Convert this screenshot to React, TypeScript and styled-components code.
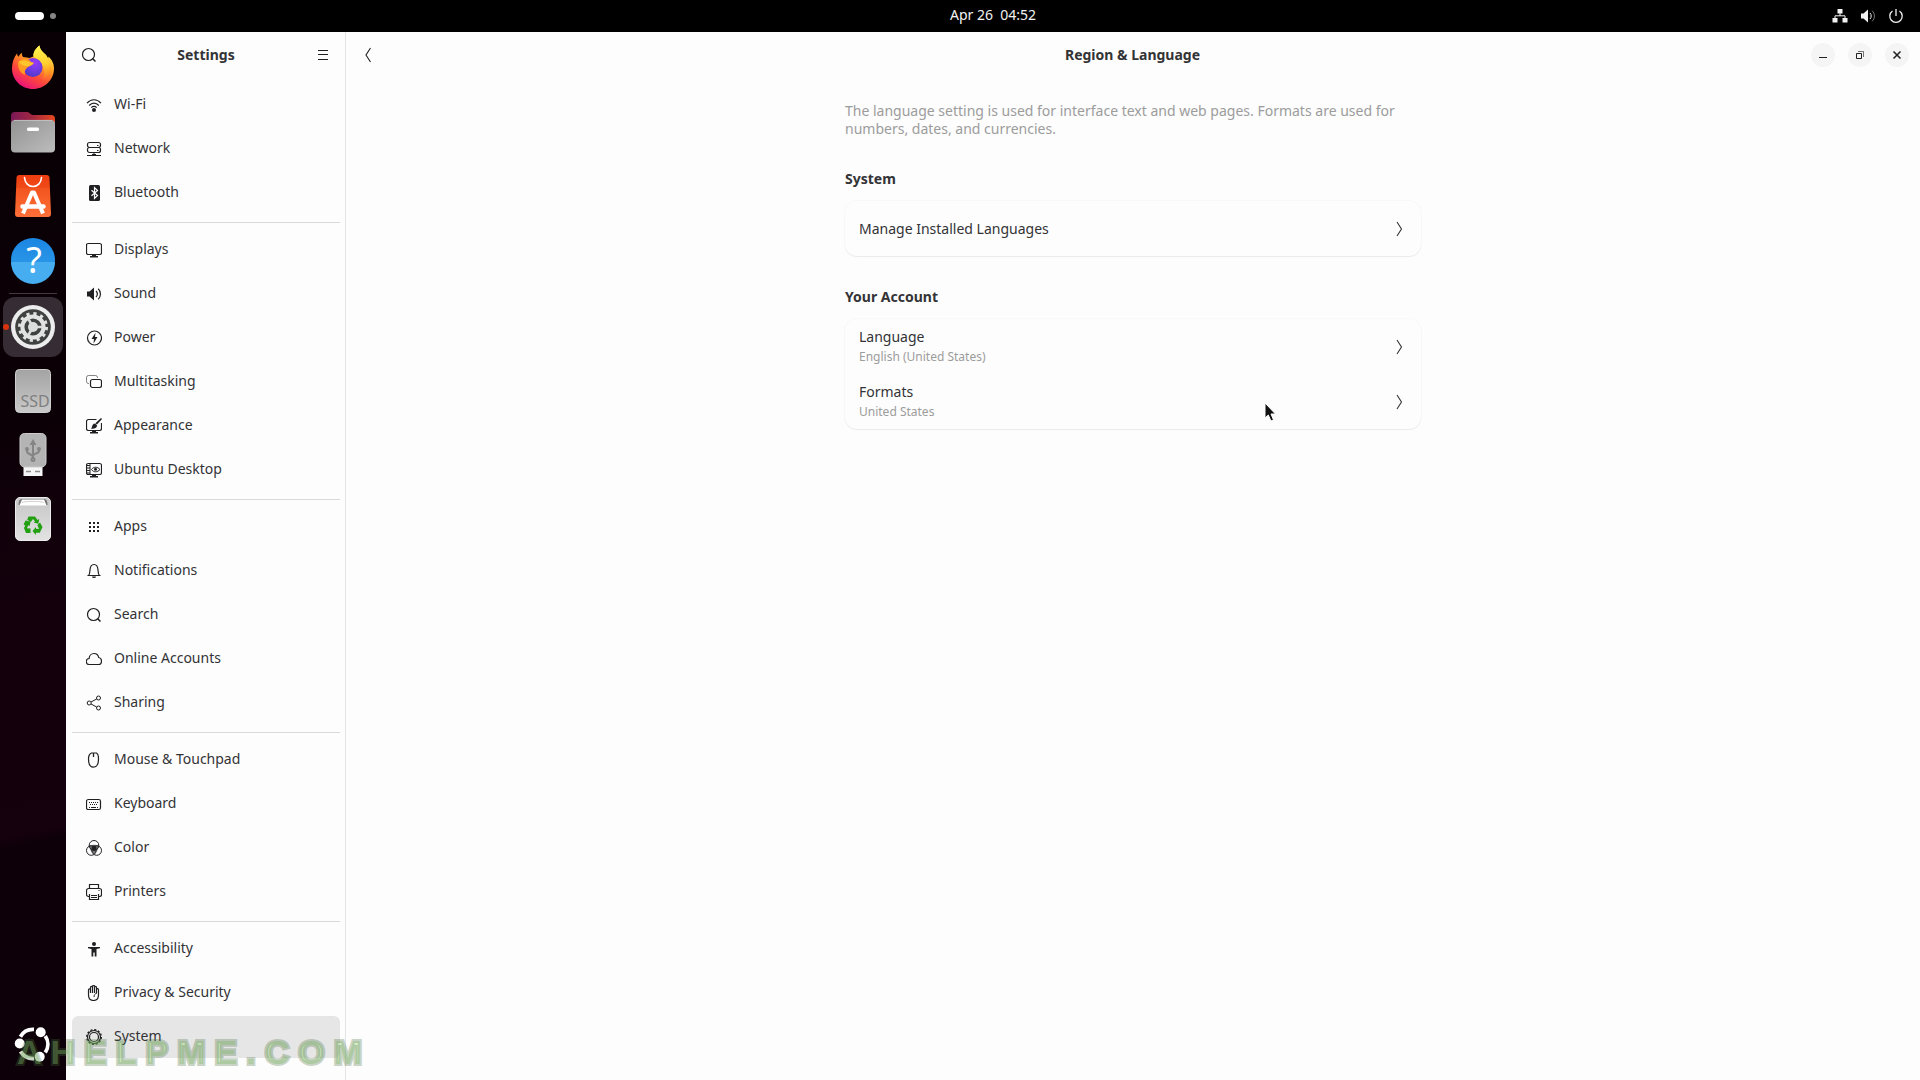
import React from "react";
import styled, { createGlobalStyle, css } from "styled-components";

const ink = "#333336";
const iconInk = "#202023";
const muted = "#9c9c9c";

const GlobalStyle = createGlobalStyle`
  * { box-sizing: border-box; }
  html, body { margin: 0; height: 100%; }
  #root { height: 100%; }
  body { background: #0e0009; overflow: hidden; }
  body, button { font-family: "Noto Sans", "Open Sans", sans-serif; font-size: 14px; color: ${ink}; }
  button { border: 0; padding: 0; background: none; }
`;

const Desktop = styled.div`
  min-height: 100vh;
  display: grid;
  grid-template: 32px 1fr / 66px 1fr;
  position: relative;
`;

const TopBar = styled.header`
  grid-column: 1 / -1;
  display: grid;
  grid-template-columns: 66px 1fr;
  align-items: center;
  background: #000;
  color: #f2f2f2;
`;

const Workspaces = styled.button`
  display: flex;
  align-items: center;
  gap: 6px;
  padding-left: 15px;
`;

const Workspace = styled.span<{ $active?: boolean }>`
  width: ${(p) => (p.$active ? 29 : 6)}px;
  height: ${(p) => (p.$active ? 8 : 6)}px;
  border-radius: 4px;
  background: ${(p) => (p.$active ? "#fff" : "#858585")};
`;

const BarRest = styled.div`
  display: grid;
  grid-template-columns: 1fr auto 1fr;
  align-items: center;
`;

const Clock = styled.button`
  grid-column: 2;
  padding-bottom: 2px;
  color: #f2f2f2;
  line-height: 20px;
  white-space: pre;
`;

const Status = styled.button`
  justify-self: end;
  display: flex;
  gap: 12px;
  padding-right: 16px;
  color: #f2f2f2;
`;

const Dock = styled.nav`
  display: flex;
  flex-direction: column;
  align-items: center;
  padding: 4px 0;
  background: linear-gradient(168deg, #080004 0%, #0b0006 36%, #12000b 50%, #15000e 76%, #0d0008 77%, #0d0008 100%);
`;

const DockItem = styled.button<{ $active?: boolean }>`
  position: relative;
  width: 60px;
  height: 60px;
  margin: 2px 0;
  flex: none;
  display: grid;
  place-items: center;
  border-radius: 12px;
  ${(p) => p.$active && css`background: #352c34;`}
`;

const RunningDot = styled.span`
  position: absolute;
  left: 0;
  top: 27px;
  width: 6px;
  height: 6px;
  border-radius: 50%;
  background: #d8320e;
`;

const DockRule = styled.hr`
  width: 48px;
  height: 1px;
  margin: 1px 0;
  flex: none;
  border: 0;
  background: #423a40;
`;

const DockSpacer = styled.div`
  flex: 1;
`;

const Window = styled.div`
  display: grid;
  grid-template-columns: 280px 1fr;
  background: #fdfdfd;
`;

const Sidebar = styled.aside`
  border-right: 1px solid #e4e4e4;
`;

const PaneHeader = styled.header<{ $side?: boolean }>`
  height: 46px;
  display: grid;
  grid-template-columns: 1fr auto 1fr;
  align-items: center;
  padding: ${(p) => (p.$side ? "0 10px 0 11px" : "0 11px 0 10px")};
`;

const Title = styled.h1`
  margin: 0;
  font-size: 14px;
  line-height: 20px;
  font-weight: 700;
`;

const IconButton = styled.button<{ $end?: boolean }>`
  width: 24px;
  height: 24px;
  display: grid;
  place-items: center;
  color: ${iconInk};
  justify-self: ${(p) => (p.$end ? "end" : "start")};
`;

const WindowButtons = styled.div`
  display: flex;
  justify-content: flex-end;
  gap: 13px;
`;

const RoundButton = styled.button`
  width: 24px;
  height: 24px;
  display: grid;
  place-items: center;
  border-radius: 50%;
  color: ${iconInk};
  background: #f5f5f5;
`;

const Nav = styled.nav`
  padding: 5px 5px 0 6px;
`;

const NavGroup = styled.ul`
  list-style: none;
  margin: 0;
  padding: 0;
  & + & {
    margin-top: 7px;
    padding-top: 5px;
    border-top: 1px solid #d9d9d9;
  }
`;

const NavLink = styled.a<{ $selected?: boolean }>`
  display: flex;
  align-items: center;
  gap: 12px;
  height: 42px;
  padding: 0 14px;
  border-radius: 6px;
  color: ${iconInk};
  text-decoration: none;
  background: ${(p) => (p.$selected ? "#e6e6e6" : "transparent")};
`;

const NavLabel = styled.span`
  padding-bottom: 2px;
  line-height: 20px;
  color: ${ink};
`;

const NavItem = styled.li`
  padding: 1px 0;
`;

const Page = styled.div`
  max-width: 576px;
  margin: 0 auto;
  padding-top: 24px;
`;

const Description = styled.p`
  margin: 0;
  line-height: 18px;
  color: ${muted};
`;

const SectionTitle = styled.h2`
  margin: 32px 0 13px;
  font-size: 14px;
  line-height: 18px;
  font-weight: 700;
`;

const Card = styled.div`
  border-radius: 12px;
  background: #fdfdfd;
  box-shadow: 0 0 0 1px rgba(0, 0, 0, 0.02), 0 1px 1px rgba(0, 0, 0, 0.06);
`;

const CardRow = styled.button`
  width: 100%;
  height: 55px;
  display: flex;
  align-items: center;
  justify-content: space-between;
  padding: 0 14px;
  text-align: left;
`;

const RowText = styled.span`
  display: grid;
  line-height: 20px;
`;

const RowSub = styled.span`
  font-size: 12px;
  line-height: 20px;
  color: ${muted};
`;

const Pointer = styled.svg`
  position: absolute;
  left: 1264px;
  top: 402px;
`;

const Watermark = styled.div`
  position: absolute;
  left: 17px;
  bottom: 10px;
  font: 700 34px/36px "Liberation Sans", sans-serif;
  letter-spacing: 9px;
  color: rgba(150, 215, 120, 0.4);
  -webkit-text-stroke: 4px rgba(70, 110, 60, 0.28);
  pointer-events: none;
`;

const G = ({ children, size = 16 }: { children: React.ReactNode; size?: number }) => (
  <svg width={size} height={size} viewBox="0 0 16 16" fill="none" stroke="currentColor" aria-hidden="true">
    {children}
  </svg>
);
const solid = { fill: "currentColor", stroke: "none" };

const monitor = (
  <>
    <rect x=".5" y="1.5" width="15" height="11" rx="1.800" strokeWidth="1.200" />
    <path {...solid} d="M6 13h4v1h2v1.500H4V14h2z" />
  </>
);

const icons: Record<string, React.ReactNode> = {
  wifi: (
    <G>
      <path strokeWidth="1.200" d="M1 6.200C5 1.600 11 1.600 15 6.200M3.200 8.500c2.800-3.100 6.800-3.100 9.600 0M5.300 10.600c1.600-1.700 3.800-1.700 5.400 0" />
      <circle {...solid} cx="8" cy="13" r="2" />
    </G>
  ),
  network: (
    <G>
      <rect x="1.500" y="1.500" width="13" height="5" rx="2" strokeWidth="1.200" />
      <rect x="1.500" y="6.500" width="13" height="5" rx="2" strokeWidth="1.200" />
      <path d="M1 14.500h14M8 11.500v2M11 4.500h1.500M11 9.500h1.500M6 13.500h4" />
    </G>
  ),
  bluetooth: (
    <G>
      <rect {...solid} x="3" y="0" width="11" height="16" rx="1.600" />
      <path stroke="#fdfdfd" strokeWidth="1.200" d="M5.500 5.300l6 5.300-3 2.700V2.700l3 2.700-6 5.300" />
    </G>
  ),
  displays: <G>{monitor}</G>,
  sound: (
    <G>
      <path {...solid} d="M1 5.500h2.500L8 1.500v13l-4.500-4H1z" />
      <path strokeWidth="1.200" d="M10 5c1.600 1.700 1.600 4.300 0 6M12.200 2.800c3 2.900 3 7.500 0 10.400" />
    </G>
  ),
  power: (
    <G>
      <circle cx="8.500" cy="8" r="7" strokeWidth="1.200" />
      <path {...solid} d="M9.500 2.800L5.500 9H8l-.5 4.500 4-6.500H9z" />
    </G>
  ),
  multitasking: (
    <G>
      <rect x="4.500" y="5.500" width="11" height="8" rx="2" strokeWidth="1.200" />
      <path opacity=".55" d="M3 9.500h-.5a2 2 0 0 1-2-2v-4a2 2 0 0 1 2-2h7a2 2 0 0 1 2 2V4" />
    </G>
  ),
  appearance: (
    <G>
      <path strokeWidth="1.200" d="M10.500 1.500h-8a2 2 0 0 0-2 2v7a2 2 0 0 0 2 2h11a2 2 0 0 0 2-2V5" />
      <path {...solid} d="M6 13h4v1h2v1.500H4V14h2zM15 0l1 1-5 5.600-1.600-1.300zM9 5.600l2 1.700c.3 2.500-2.300 3.900-6 3.400 1.400-.8.800-4.800 4-5.100z" />
    </G>
  ),
  ubuntu: (
    <G>
      {monitor}
      <path d="M1 3.500h3M1 6h3M1 8.500h3M1 11h3M4 2v10" />
      <path d="M5.500 7.500c2-3 6-3 8.500 0-2.500 3-6.500 3-8.500 0z" />
      <circle {...solid} cx="9.500" cy="7.300" r="1.500" />
    </G>
  ),
  apps: (
    <G>
      {[3, 7, 11].flatMap((y) => [3, 7, 11].map((x) => <rect key={`${x}-${y}`} {...solid} x={x} y={y} width="2" height="2" />))}
    </G>
  ),
  bell: (
    <G>
      <path strokeWidth="1.200" d="M2.500 12.500c1.300-1 1.300-3 1.500-5.500C4.200 3.500 5.500 1.500 8 1.500s3.800 2 4 5.500c.2 2.500.2 4.500 1.500 5.500z" />
      <path {...solid} d="M6 13.500h4a2 1.500 0 0 1-4 0z" />
    </G>
  ),
  search: (
    <G>
      <circle cx="7.500" cy="7.500" r="6" strokeWidth="1.200" />
      <path strokeWidth="1.500" d="M11.500 11.500l3 3" />
    </G>
  ),
  cloud: (
    <G>
      <path strokeWidth="1.200" d="M3.500 13.500a3 3 0 0 1-.4-6C3.300 4.700 5.400 2.500 8 2.500c2.400 0 4.200 1.500 4.700 4 1.600.2 2.800 1.600 2.800 3.500s-1.200 3.500-3 3.500z" />
    </G>
  ),
  share: (
    <G strokeWidth="1.200">
      <circle cx="3.200" cy="8" r="2" />
      <circle cx="12.500" cy="3" r="2" />
      <circle cx="12.500" cy="13" r="2" />
      <path d="M5 7l5.700-3M5 9l5.700 3" />
    </G>
  ),
  mouse: (
    <G>
      <path strokeWidth="1.200" d="M5.500 1h5c1.600 1 2 3 2 5.700 0 5-1.300 8.500-5 8.500s-5-3.500-5-8.500c0-2.700.9-4.700 3-5.700z" />
      <path strokeWidth="1.300" d="M7.500 1v4" />
    </G>
  ),
  keyboard: (
    <G>
      <rect x=".5" y="3.500" width="14" height="10" rx="1.800" strokeWidth="1.200" />
      <path strokeDasharray="1 1" d="M3 6.500h10M4 8.500h8" />
      <path d="M3 11.500h1M5 11.500h5M11 11.500h1" />
    </G>
  ),
  color: (
    <G>
      <path {...solid} opacity=".6" d="M3 5.500c3-1 7-1 10 0 0 3-2 6-5 9-3-3-5-6-5-9z" />
      <path {...solid} d="M5.500 6.800L8 5.500l2.500 1.300-.5 3L8 11l-2-1.200z" />
      <circle cx="8" cy="5.300" r="4.800" />
      <circle cx="5.300" cy="10.500" r="4.800" />
      <circle cx="10.700" cy="10.500" r="4.800" />
    </G>
  ),
  printer: (
    <G>
      <path strokeWidth="1.200" d="M3.500 4V.5h9V4M3 12.500H2.500a2 2 0 0 1-2-2v-4a2 2 0 0 1 2-2h11a2 2 0 0 1 2 2v4a2 2 0 0 1-2 2H13M3.500 10v5.500h9V10M5 11.500h6M5 13.500h6M12.500 6.500h1" />
    </G>
  ),
  access: (
    <G>
      <circle {...solid} cx="8" cy="3" r="2" />
      <path {...solid} d="M2 6h12v1.200l-3.500.8v7.500H8.700v-4H7.300v4H5.500V8L2 7.200z" />
    </G>
  ),
  hand: (
    <G>
      <path strokeWidth="1.200" d="M2.500 10V5c0-1.500 2-1.500 2 0v3V2.500c0-1.500 2-1.500 2 0V8 1.500c0-1.400 2-1.400 2 0V8 2.500c0-1.500 2-1.500 2 0V8 4.500c.2-1.300 2-1.200 2 .5V10c0 3-1.500 5.500-5 5.500s-5-2.500-5-5.500z" />
      <path d="M8 12c0-2 1-3.500 3-4" />
    </G>
  ),
  gear: (
    <G>
      <circle cx="8" cy="8" r="6.500" strokeWidth="1.200" />
      <circle cx="8" cy="8" r="4.500" strokeWidth="1.200" />
      <circle cx="8" cy="8" r="7.300" strokeWidth="1.400" strokeDasharray="2 1.822" />
    </G>
  ),
};

const groups: [string, string][][] = [
  [["wifi", "Wi-Fi"], ["network", "Network"], ["bluetooth", "Bluetooth"]],
  [["displays", "Displays"], ["sound", "Sound"], ["power", "Power"], ["multitasking", "Multitasking"], ["appearance", "Appearance"], ["ubuntu", "Ubuntu Desktop"]],
  [["apps", "Apps"], ["bell", "Notifications"], ["search", "Search"], ["cloud", "Online Accounts"], ["share", "Sharing"]],
  [["mouse", "Mouse & Touchpad"], ["keyboard", "Keyboard"], ["color", "Color"], ["printer", "Printers"]],
  [["access", "Accessibility"], ["hand", "Privacy & Security"], ["gear", "System"]],
];

const Chevron = ({ left }: { left?: boolean }) => (
  <G>
    <path d={left ? "M10.500 1L6 8l4.500 7" : "M6 1l4.500 7L6 15"} strokeWidth="1.100" />
  </G>
);

const Art = ({ children }: { children: React.ReactNode }) => (
  <svg width="48" height="48" viewBox="0 0 48 48" fill="none" aria-hidden="true">
    {children}
  </svg>
);

const Firefox = () => (
  <Art>
    <defs>
      <linearGradient id="fxBody" x1="36" y1="6" x2="14" y2="44" gradientUnits="userSpaceOnUse">
        <stop offset="0" stopColor="#fff44f" />
        <stop offset=".35" stopColor="#ff9a22" />
        <stop offset=".65" stopColor="#ff4a3a" />
        <stop offset="1" stopColor="#e8107e" />
      </linearGradient>
      <linearGradient id="fxTail" x1="30" y1="2" x2="40" y2="38" gradientUnits="userSpaceOnUse">
        <stop offset="0" stopColor="#fff44f" />
        <stop offset=".5" stopColor="#ffd02f" />
        <stop offset="1" stopColor="#ff7a1f" stopOpacity="0" />
      </linearGradient>
      <radialGradient id="fxGlobe" cx=".6" cy=".25" r=".8">
        <stop offset="0" stopColor="#9a3bff" />
        <stop offset="1" stopColor="#4a3ac8" />
      </radialGradient>
    </defs>
    <path fill="url(#fxBody)" d="M8 9.500c.3 1.500.8 2.500 1.500 3.300 1-2 2.200-3.300 3.300-4 0 1.800.3 3 1.200 4.200 3 .3 4.500.5 6.500 1l4-1.500C24 8 27 4 30.500 1.500c.3 4 3 6 6 9 1 1 2 2.500 2.500 4.200l.6-2.200C44 17 45 21 45 24.500 45 36 35.500 45 24 45S3 36 3 24.500C3 18 5 13 8 9.500z" />
    <path fill="url(#fxTail)" d="M24.500 12.500C24 8 27 4 30.500 1.500c.3 4 3 6 6 9C43 18 42 32 33 38c3-6 3-13-.5-18-2-3-5-6-8-7.500z" />
    <circle cx="24" cy="23.500" r="9.500" fill="url(#fxGlobe)" />
    <path fill="#ff9b22" d="M9 18c3-3 7-4.200 11-2.500 1.500 2.500 3 3 5 3-1 3-4.500 3.500-6 4.500-3 2-4 5-3 8-5-2-7.500-7-7-13z" />
    <path fill="#ffc52e" d="M10 18c3-2 7-2 9-.5 2 1.500 4 1.200 5.500 1.500-1.500 2.500-4.500 2.500-6 3.500-3-.5-6-1-8.500-4.500z" />
  </Art>
);

const Files = () => (
  <Art>
    <defs>
      <linearGradient id="flBack" x1="2" y1="0" x2="46" y2="0" gradientUnits="userSpaceOnUse">
        <stop offset="0" stopColor="#7a1858" />
        <stop offset=".5" stopColor="#a32840" />
        <stop offset="1" stopColor="#e9481f" />
      </linearGradient>
      <linearGradient id="flFront" x1="0" y1="0" x2="1" y2="1">
        <stop offset="0" stopColor="#929292" />
        <stop offset="1" stopColor="#bdbdbd" />
      </linearGradient>
    </defs>
    <path fill="url(#flBack)" d="M2 8a4 4 0 0 1 4-4h12c3 0 3 3 6 3h18a4 4 0 0 1 4 4v10H2z" />
    <rect x="2" y="12" width="44" height="32.500" rx="4" fill="url(#flFront)" />
    <path stroke="#c9c9c9" strokeWidth=".8" d="M5 12.400h38" />
    <rect x="18" y="19.500" width="12" height="3.500" rx="1.500" fill="#fff" />
  </Art>
);

const Store = () => (
  <Art>
    <defs>
      <linearGradient id="stBag" x1="0" y1="0" x2="0" y2="1">
        <stop offset="0" stopColor="#ef3d10" />
        <stop offset=".3" stopColor="#f04a18" />
        <stop offset=".31" stopColor="#f2541f" />
        <stop offset="1" stopColor="#ff7038" />
      </linearGradient>
    </defs>
    <path fill="url(#stBag)" d="M10.500 3h27a3 3 0 0 1 3 3L42 42a3 3 0 0 1-3 3H9a3 3 0 0 1-3-3L7.500 6a3 3 0 0 1 3-3z" />
    <path stroke="#fff" strokeWidth="1.600" strokeLinecap="round" d="M15.500 5.500c.3 5 3.500 9 8.500 9s8.200-4 8.500-9" />
    <path stroke="#fff" strokeWidth="4" strokeLinejoin="round" d="M14 41.500L23 20.500h2l9 21" />
    <path stroke="#fff" strokeWidth="4.500" strokeLinecap="round" d="M13.500 34.500h21" />
  </Art>
);

const HelpText = styled.text`
  font: 36px "Noto Sans", sans-serif;
  fill: #fff;
`;

const Help = () => (
  <Art>
    <defs>
      <linearGradient id="hpTop" x1="0" y1="0" x2="0" y2="1">
        <stop offset="0" stopColor="#1b86e2" />
        <stop offset="1" stopColor="#34a0ea" />
      </linearGradient>
    </defs>
    <circle cx="24" cy="24" r="22" fill="url(#hpTop)" />
    <path fill="#46adf0" d="M2 26h44a22 22 0 0 1-44 0z" />
    <HelpText x="25" y="37" textAnchor="middle">?</HelpText>
  </Art>
);

const Gear = () => (
  <Art>
    <circle cx="24" cy="24" r="22" fill="#ececec" />
    <circle cx="24" cy="24" r="17.800" fill="#3f4040" />
    <circle cx="24" cy="24" r="13.500" stroke="#e2e2e2" strokeWidth="3" strokeDasharray="3.200 3.868" />
    <circle cx="24" cy="24" r="10.600" stroke="#e2e2e2" strokeWidth="4" />
    <circle cx="24" cy="24" r="5" fill="#dcdcdc" />
    <path stroke="#dcdcdc" strokeWidth="2.600" d="M24 24h10M24 24l-5-8.700M24 24l-5 8.700" />
  </Art>
);

const DriveText = styled.text`
  font: 16px "Noto Sans", sans-serif;
  fill: #808080;
`;

const Ssd = () => (
  <Art>
    <defs>
      <linearGradient id="sdBody" x1="0" y1="0" x2="0" y2="1">
        <stop offset="0" stopColor="#a3a3a3" />
        <stop offset="1" stopColor="#c9c9c9" />
      </linearGradient>
    </defs>
    <rect x="6.500" y="2.500" width="35" height="43" rx="4" fill="url(#sdBody)" stroke="#cfcfcf" />
    <DriveText x="26" y="40" textAnchor="middle">SSD</DriveText>
  </Art>
);

const Usb = () => (
  <Art>
    <rect x="14.500" y="33" width="19" height="12" fill="#f6f6f6" />
    <path stroke="#8e8e8e" strokeWidth="1.500" d="M17 40.500h5M26 40.500h5" />
    <rect x="11" y="2.500" width="26" height="33.500" rx="4.500" fill="#b4b4b4" stroke="#cdcdcd" />
    <g stroke="#858585" strokeWidth="2">
      <path d="M24 12v16M18 18v2.500c0 3 6 2.500 6 5.500M30 18v2c0 3-6 2-6 5" />
      <path d="M24 8l3.500 6h-7z" fill="#858585" stroke="none" />
      <circle cx="24" cy="28.500" r="1.500" />
      <circle cx="18" cy="18" r="1" />
      <circle cx="30" cy="18" r="1" />
    </g>
  </Art>
);

const Trash = () => (
  <Art>
    <defs>
      <linearGradient id="trBody" x1="0" y1="0" x2="0" y2="1">
        <stop offset="0" stopColor="#c6c6c6" />
        <stop offset="1" stopColor="#e2e2e2" />
      </linearGradient>
    </defs>
    <rect x="6.500" y="2.500" width="35" height="43" rx="4.500" fill="url(#trBody)" stroke="#ececec" />
    <path fill="#777" d="M9.500 10c0-4 1-6 3-6h23c2 0 3 2 3 6z" />
    <path fill="#fff" d="M13 4.500h22l2.500 6h-27z" />
    <path stroke="#c4c4c4" strokeWidth=".8" d="M13 7.500c3-1.500 19-1.500 22 0" />
    <g fill="#22a012">
      <path d="M19.500 21.500h6.500l2.500 3.500 1.700-1-.8 4.800-4.900-1.200 1.600-1-2.100-2.600-2.200 3-3.600-2.300z" />
      <path d="M16.500 25.500l5 1-.8 4.600-1.500-.8-1.200 3 3.500.2V38h-4.500L15 33l1.200-2.500-1.600-1z" />
      <path d="M31 27.500l2.500 4.500-2.700 5.800H27V40l-3.500-4 3.500-4v1.800l3 .1-1.600-4z" />
    </g>
  </Art>
);

const Ubuntu = () => (
  <Art>
    <path stroke="#fff" strokeWidth="3.800" d="M11.400 16.700A14.600 14.600 0 0 1 25 9.400M36.300 16a14.600 14.600 0 0 1 0 16.500M25 38.600a14.600 14.600 0 0 1-13.400-7" />
    <circle cx="31.700" cy="12.200" r="5" fill="#fff" />
    <circle cx="10.700" cy="23.500" r="5" fill="#fff" />
    <circle cx="30.700" cy="36.700" r="5" fill="#fff" />
  </Art>
);

export default function App() {
  return (
    <Desktop>
      <GlobalStyle />
      <TopBar>
        <Workspaces aria-label="Workspaces">
          <Workspace $active />
          <Workspace />
        </Workspaces>
        <BarRest>
          <Clock>{"Apr 26  04:52"}</Clock>
          <Status aria-label="System menu">
            <G>
              <path {...solid} d="M5.500 1h5v4.500h-5zM.5 10h5v4.500h-5zM10.500 10h5v4.500h-5z" />
              <path d="M8 5v3M3 10V7.800h10V10" />
            </G>
            <G>
              <path {...solid} d="M1 5.500h2.500L8 1.500v13l-4.500-4H1z" />
              <path d="M10 5c1.600 1.700 1.600 4.300 0 6" />
              <path opacity=".5" d="M12.200 2.800c3 2.900 3 7.500 0 10.400" />
            </G>
            <G>
              <path strokeWidth="1.300" d="M4.500 3a6.200 6.200 0 1 0 7 0M8 1v7" />
            </G>
          </Status>
        </BarRest>
      </TopBar>

      <Dock aria-label="Dock">
        <DockItem aria-label="Firefox"><Firefox /></DockItem>
        <DockItem aria-label="Files"><Files /></DockItem>
        <DockItem aria-label="App Center"><Store /></DockItem>
        <DockItem aria-label="Help"><Help /></DockItem>
        <DockRule />
        <DockItem aria-label="Settings" $active><RunningDot /><Gear /></DockItem>
        <DockItem aria-label="SSD drive"><Ssd /></DockItem>
        <DockItem aria-label="USB drive"><Usb /></DockItem>
        <DockItem aria-label="Trash"><Trash /></DockItem>
        <DockSpacer />
        <DockItem aria-label="Show Apps"><Ubuntu /></DockItem>
      </Dock>

      <Window>
        <Sidebar>
          <PaneHeader $side>
            <IconButton aria-label="Search settings">{icons.search}</IconButton>
            <Title>Settings</Title>
            <IconButton $end aria-label="Main menu">
              <G><path d="M3 3.500h10M3 7.500h10M3 12.500h10" /></G>
            </IconButton>
          </PaneHeader>
          <Nav aria-label="Settings panels">
            {groups.map((group, i) => (
              <NavGroup key={i}>
                {group.map(([icon, label]) => (
                  <NavItem key={label}>
                    <NavLink href="#" $selected={label === "System"}>
                      {icons[icon]}
                      <NavLabel>{label}</NavLabel>
                    </NavLink>
                  </NavItem>
                ))}
              </NavGroup>
            ))}
          </Nav>
        </Sidebar>

        <main>
          <PaneHeader>
            <IconButton aria-label="Back"><Chevron left /></IconButton>
            <Title>Region &amp; Language</Title>
            <WindowButtons>
              <RoundButton aria-label="Minimize"><G><path d="M4 10.500h8" /></G></RoundButton>
              <RoundButton aria-label="Restore">
                <G>
                  <path d="M4.500 6.500h5v5h-5z" />
                  <path opacity=".6" d="M6 4.500h5.500V10" />
                </G>
              </RoundButton>
              <RoundButton aria-label="Close"><G><path strokeWidth="1.500" d="M4.500 4.500l7 7M11.500 4.500l-7 7" /></G></RoundButton>
            </WindowButtons>
          </PaneHeader>
          <Page>
            <Description>
              The language setting is used for interface text and web pages. Formats are used for numbers, dates, and currencies.
            </Description>
            <SectionTitle>System</SectionTitle>
            <Card>
              <CardRow><RowText>Manage Installed Languages</RowText><Chevron /></CardRow>
            </Card>
            <SectionTitle>Your Account</SectionTitle>
            <Card>
              <CardRow><RowText>Language<RowSub>English (United States)</RowSub></RowText><Chevron /></CardRow>
              <CardRow><RowText>Formats<RowSub>United States</RowSub></RowText><Chevron /></CardRow>
            </Card>
          </Page>
        </main>
      </Window>

      <Pointer width="14" height="22" viewBox="0 0 14 22" aria-hidden="true">
        <path d="M1 1v15l3.300-3 2.700 6 2.500-1.200L7 12h4.500z" fill="#111" stroke="#fff" />
      </Pointer>
      <Watermark>AHELPME.COM</Watermark>
    </Desktop>
  );
}
